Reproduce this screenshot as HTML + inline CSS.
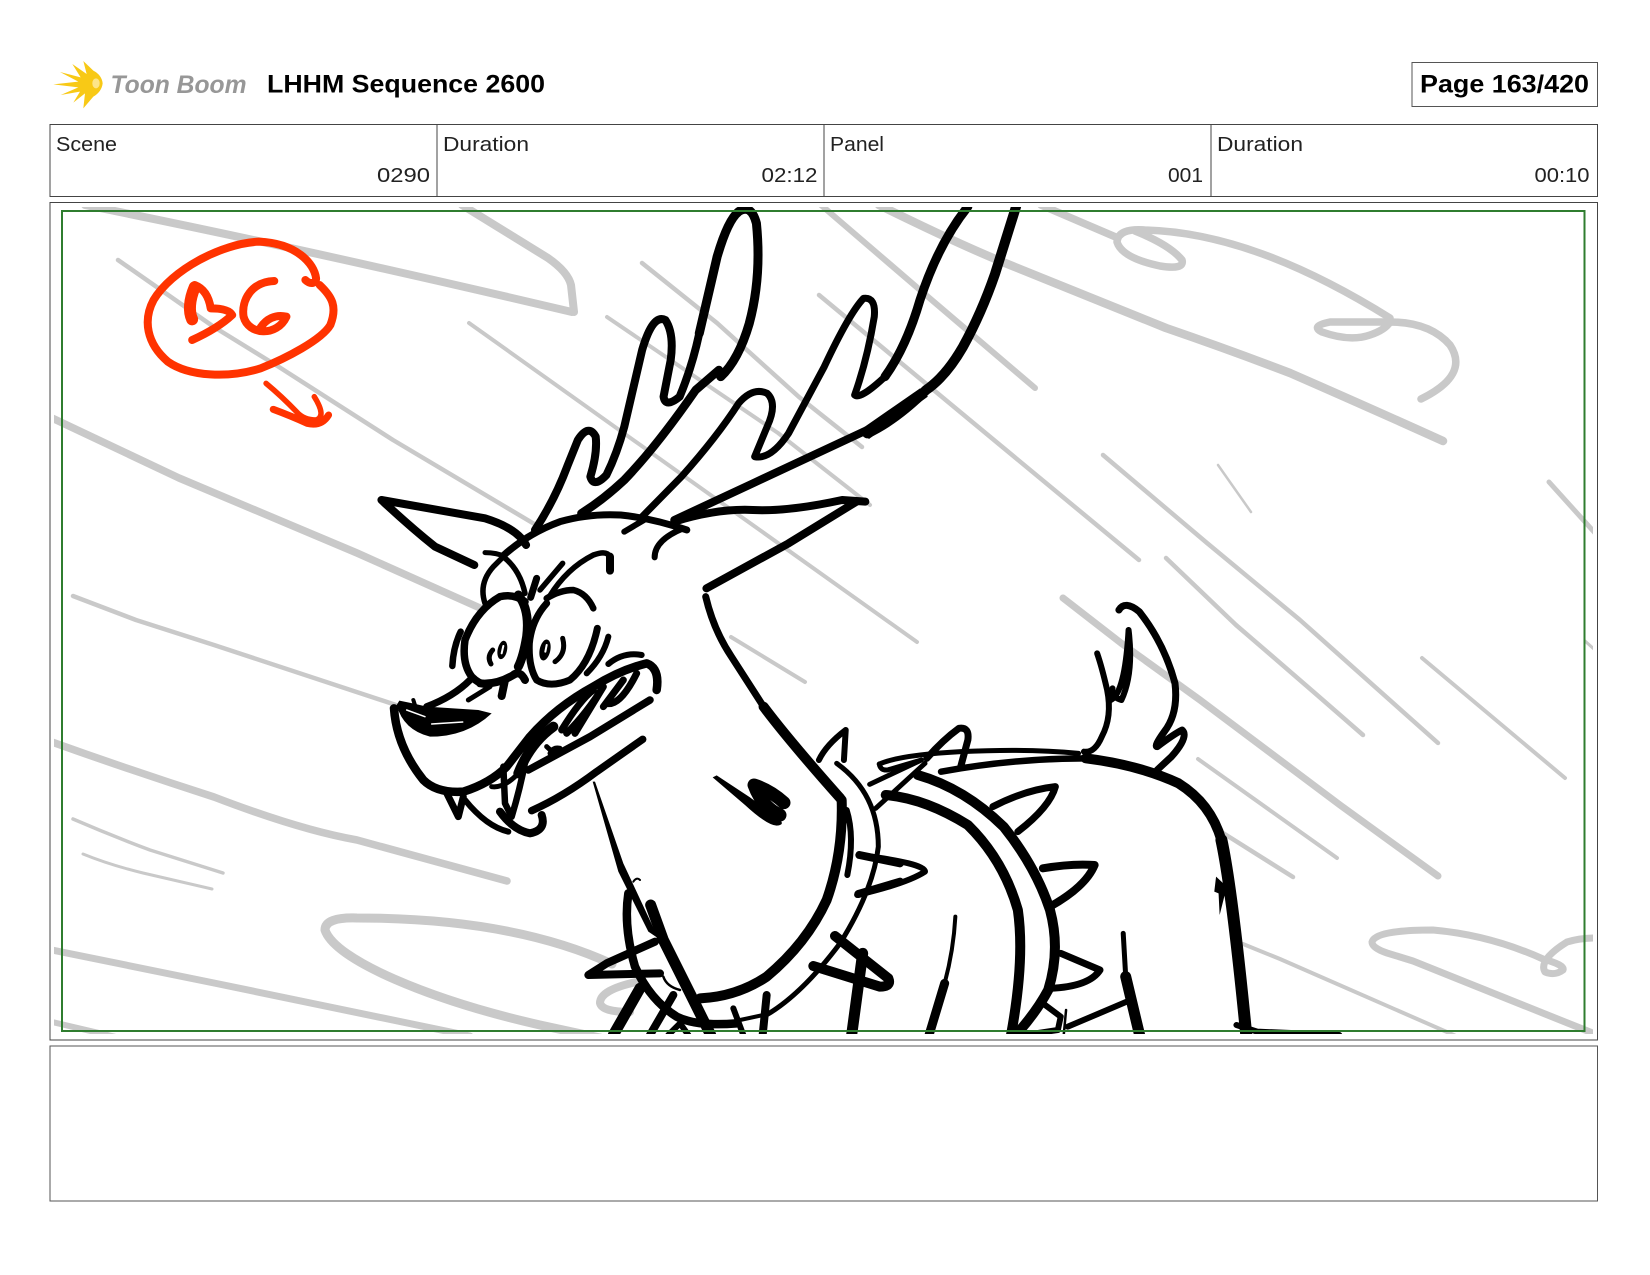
<!DOCTYPE html>
<html><head><meta charset="utf-8"><title>LHHM Sequence 2600</title>
<style>
html,body{margin:0;padding:0;background:#fff;width:1650px;height:1275px;overflow:hidden}
svg{display:block}
text{font-family:"Liberation Sans",sans-serif;fill:#222}
.a path{fill:none;stroke-linecap:round;stroke-linejoin:round;vector-effect:non-scaling-stroke}
.g path{stroke:#c9c9c9}
.k path{stroke:#000}
.r path{stroke:#ff3300}
.a path.f{fill:#000;stroke:none}
.k ellipse{fill:#000}
</style></head><body>
<svg width="1650" height="1275" viewBox="0 0 1650 1275" xmlns="http://www.w3.org/2000/svg">
<defs><clipPath id="c"><rect x="54" y="207" width="1539" height="827"/></clipPath></defs>
<rect width="1650" height="1275" fill="#fff"/>

<!-- logo -->
<g transform="translate(40,50) scale(.3333)">
<path fill="#f8c916" d="M188,100 Q185,75 160,62 L130,33 L140,72 L97,42 L122,82 L60,66 L115,95 L40,103 L115,112 L62,135 L120,125 L100,158 L135,130 L130,175 L160,140 Q185,125 188,100Z"/>
<ellipse cx="168" cy="100" rx="11" ry="15" fill="#fde58a"/>
</g>
<text x="110.5" y="93" font-size="25" font-weight="bold" font-style="italic" textLength="136" lengthAdjust="spacingAndGlyphs" style="fill:#979797">Toon Boom</text>

<text x="267" y="92.6" font-size="25" font-weight="bold" textLength="278" lengthAdjust="spacingAndGlyphs" style="fill:#000">LHHM Sequence 2600</text>
<rect x="1412" y="62.5" width="185.5" height="44" fill="#fff" stroke="#555" stroke-width="1"/>
<text x="1420" y="92.6" font-size="25" font-weight="bold" textLength="169" lengthAdjust="spacingAndGlyphs" style="fill:#000">Page 163/420</text>

<!-- header table -->
<rect x="50" y="124.5" width="1547.5" height="72" fill="#fff" stroke="#444" stroke-width="1"/>
<path d="M437,124.5V196.5M824,124.5V196.5M1211,124.5V196.5" stroke="#444" stroke-width="1" fill="none"/>
<g font-size="20">
<text x="56" y="151" textLength="61" lengthAdjust="spacingAndGlyphs">Scene</text>
<text x="443" y="151" textLength="86" lengthAdjust="spacingAndGlyphs">Duration</text>
<text x="830" y="151" textLength="54" lengthAdjust="spacingAndGlyphs">Panel</text>
<text x="1217" y="151" textLength="86" lengthAdjust="spacingAndGlyphs">Duration</text>
<text x="377" y="182" textLength="53" lengthAdjust="spacingAndGlyphs">0290</text>
<text x="761.5" y="182" textLength="56" lengthAdjust="spacingAndGlyphs">02:12</text>
<text x="1168" y="182" textLength="35" lengthAdjust="spacingAndGlyphs">001</text>
<text x="1534.5" y="182" textLength="55" lengthAdjust="spacingAndGlyphs">00:10</text>
</g>

<!-- panel frames -->
<rect x="50" y="202.5" width="1547.5" height="837.5" fill="#fff" stroke="#444" stroke-width="1"/>
<rect x="50" y="1046" width="1547.5" height="155" fill="#fff" stroke="#555" stroke-width="1"/>

<g clip-path="url(#c)">
<!-- grey background strokes (page coordinates) -->
<g class="a g">
<path stroke-width="8" d="M85,205 Q300,248 572,312 M574,312 L571,285 Q568,272 548,258 L462,205"/>
<path stroke-width="4.5" d="M118,260 L214,327 L279,367 L393,440 L536,525"/>
<path stroke-width="7.5" d="M52,418 L179,478 L357,553 L480,608"/>
<path stroke-width="4.5" d="M73,596 L136,620 L214,645 L396,705"/>
<path stroke-width="7.5" d="M52,742 Q130,770 214,797 Q300,830 357,840 L507,881"/>
<path stroke-width="3.5" d="M73,819 Q110,835 150,850 L223,873"/>
<path stroke-width="3" d="M83,854 Q110,865 143,873 L212,889"/>
<path stroke-width="7" d="M52,950 L214,983 L470,1036"/>
<path stroke-width="6" d="M52,1022 L116,1037"/>
<path stroke-width="9" d="M612,964 C560,940 480,918 357,918 Q325,917 325,930 C335,960 430,1000 540,1025 L600,1038"/>
<path stroke-width="8" d="M636,982 Q600,990 600,1003 Q602,1012 630,1012"/>
<path stroke-width="4" d="M469,323 L917,642"/>
<path stroke-width="4.5" d="M642,263 L717,323 L799,397 L862,447"/>
<path stroke-width="4" d="M607,317 L778,433 L870,505"/>
<path stroke-width="4.5" d="M819,295 L1000,445 L1139,560"/>
<path stroke-width="6" d="M821,205 L920,290 L1035,388"/>
<path stroke-width="8.5" d="M879,205 Q960,245 1010,265 L1166,328 Q1230,350 1290,373 Q1370,408 1443,441"/>
<path stroke-width="7.5" d="M1041,205 L1118,238 M1390,318 C1300,262 1220,232 1145,230 Q1118,228 1117,242 Q1122,258 1160,266 Q1185,270 1182,260 Q1170,245 1135,231"/>
<path stroke-width="7.5" d="M1390,322 Q1360,322 1330,322 Q1310,326 1322,332 Q1350,342 1370,335 Q1385,330 1390,322 Q1430,322 1450,345 Q1470,375 1421,399"/>
<path stroke-width="4.5" d="M1103,455 L1207,543 L1300,620 L1438,743"/>
<path stroke-width="4.5" d="M1166,558 L1236,625 Q1300,680 1363,735"/>
<path stroke-width="2.5" d="M1218,465 L1251,512"/>
<path stroke-width="5" d="M1549,482 L1595,533"/>
<path stroke-width="3" d="M1585,641 L1595,650"/>
<path stroke-width="4" d="M1422,658 L1565,778"/>
<path stroke-width="7" d="M1063,598 L1121,643 L1200,700 L1340,805 L1438,876"/>
<path stroke-width="4" d="M1198,759 L1337,858"/>
<path stroke-width="4.5" d="M1223,833 L1293,877"/>
<path stroke-width="4" d="M1243,944 L1280,959 L1456,1036"/>
<path stroke-width="7" d="M1595,1034 L1413,961 L1387,953 Q1372,948 1372,942 Q1375,930 1433,930 Q1490,935 1543,959 Q1565,965 1563,970 Q1555,976 1545,972 Q1538,960 1567,942 Q1580,938 1595,938"/>
<path stroke-width="4" d="M731,637 L805,682"/>
</g>

<!-- red annotation -->
<g class="a r" transform="translate(0,200) scale(.35714,.33333)">
<path stroke-width="8" d="M855,240 C870,255 885,250 885,235 C880,190 830,130 725,125 C620,130 480,210 430,300 C400,360 410,430 470,485 C530,530 640,535 730,505 C800,475 900,420 925,375 C945,320 930,290 895,255"/>
<path stroke-width="12" d="M545,262 C530,300 528,335 538,358"/>
<path stroke-width="8" d="M545,255 Q582,270 590,325 Q640,325 650,345 Q610,385 538,420"/>
<path stroke-width="8" d="M768,243 C705,245 675,300 682,350 C695,405 775,412 802,350 C770,342 745,358 730,382"/>
<path stroke-width="5.5" d="M745,550 Q790,590 830,635 Q850,660 885,660 Q915,650 880,590"/>
<path stroke-width="7" d="M765,628 Q820,650 860,670 Q900,680 920,645"/>
</g>

<!-- antlers, ears -->
<g class="a k" transform="translate(360,200) scale(.35714,.33333)">
<path stroke-width="8" d="M490,990 Q545,900 580,800 L610,720 Q640,670 660,710 Q665,760 645,830 Q655,865 690,825 Q720,760 740,680 L790,450 Q820,340 855,360 Q880,400 870,480 L850,590 Q855,625 895,590 Q930,500 950,400"/>
<path stroke-width="9" d="M950,400 L1000,170 Q1030,60 1060,35 Q1095,10 1110,70 Q1125,230 1090,370 Q1060,480 1010,530"/>
<path stroke-width="8.5" d="M620,940 Q680,900 740,840 Q830,740 940,570 M940,570 L1005,510"/>
<path stroke-width="7" d="M400,1068 Q470,1000 560,965 Q640,940 730,945 Q820,955 915,990"/>
<path stroke-width="7" d="M790,950 L900,830 Q1000,710 1060,610 Q1100,560 1140,580 Q1170,610 1140,680 L1105,770 Q1150,780 1200,700 L1300,500 Q1370,340 1410,295 Q1445,290 1440,350 Q1420,480 1385,585 Q1400,600 1470,530"/>
<path stroke-width="9" d="M1470,530 Q1530,440 1568,300 Q1620,130 1702,20"/>
<path stroke-width="8" d="M880,960 L1100,850 L1420,690"/>
<path stroke-width="10" d="M1420,700 Q1500,660 1585,570 Q1640,530 1688,441 Q1740,340 1778,222 L1837,20"/>
<path class="f" d="M1400,690 L1568,565 L1590,590 L1425,717Z"/>
<path stroke-width="8" d="M880,965 Q1000,925 1100,930 Q1200,935 1350,900 L1415,905 M1390,905 L1200,1030 L970,1165"/>
<path stroke-width="6" d="M825,1072 Q825,1020 905,985 M740,995 L795,960"/>
<path stroke-width="8" d="M465,1035 Q440,985 350,955 L60,900 M60,900 Q140,980 210,1040 L320,1095"/>
</g>

<!-- face -->
<g class="a k" transform="translate(390,540) scale(.33333)">
<path stroke-width="5" d="M285,38 Q320,38 345,50"/>
<path stroke-width="5.5" d="M285,190 Q265,130 310,80 L340,50 Q390,90 405,160"/>
<path stroke-width="7.5" d="M405,185 Q370,160 330,170 Q260,210 225,300 Q215,370 245,410 Q275,440 300,430"/>
<path stroke-width="9" d="M385,165 Q420,210 410,290 Q400,350 385,380"/>
<path stroke-width="7" d="M470,190 Q425,240 418,310 Q415,380 440,420 Q480,445 540,420 Q600,370 622,265"/>
<path stroke-width="6.5" d="M470,175 Q510,150 550,150 Q590,160 610,205"/>
<path stroke-width="6" d="M590,400 Q640,350 655,290"/>
<path stroke-width="5.5" d="M478,170 Q530,85 610,45 Q650,30 660,50"/>
<path stroke-width="8" d="M660,50 L660,92"/>
<path stroke-width="7" d="M422,172 L440,115"/>
<path stroke-width="5.5" d="M450,150 L518,70"/>
<path stroke-width="6.5" d="M187,378 Q190,320 212,275"/>
<ellipse cx="337" cy="330" rx="14" ry="28" transform="rotate(12 337 330)"/>
<ellipse cx="465" cy="330" rx="16" ry="32" transform="rotate(12 465 330)"/>
<path stroke-width="2" d="M340,318 L335,340 M470,315 L466,335" style="stroke:#fff"/>
<path stroke-width="5" d="M303,372 Q290,350 308,330 M495,365 Q530,340 518,295"/>
<path stroke-width="8" d="M270,430 Q320,435 370,405 Q390,390 405,420"/>
<path stroke-width="8" d="M345,420 L335,468"/>
<path stroke-width="5" d="M235,480 L300,440"/>
<path stroke-width="7" d="M240,420 Q190,470 110,500"/>
<path class="f" d="M28,482 Q70,490 110,500 L265,510 L305,520 Q230,590 120,590 Q40,570 20,495Z"/>
<path stroke-width="4" d="M70,480 L78,505"/>
<path stroke-width="1.5" d="M50,510 L105,530 M125,552 L218,546" style="stroke:#fff"/>
<path stroke-width="8.5" d="M12,505 Q20,620 100,720 Q140,760 220,755 Q300,730 350,680 L420,590 Q500,500 610,440 Q690,390 770,370 Q810,385 800,450"/>
<path stroke-width="6" d="M655,372 Q700,335 755,345"/>
<path stroke-width="7.5" d="M415,690 L600,590 L780,480"/>
<path stroke-width="7.5" d="M425,812 Q520,770 620,695 L758,598"/>
<path stroke-width="7" d="M515,570 Q570,480 610,450 M530,580 Q590,520 640,440 L555,580 M640,500 L700,420 M650,490 Q690,500 740,400"/>
<path stroke-width="10" d="M385,700 Q420,610 490,560"/>
<path stroke-width="5" d="M470,620 Q500,650 510,625 Q490,620 480,640"/>
<path stroke-width="6.5" d="M340,680 L345,790 L365,830 Q395,730 410,640"/>
<path stroke-width="5" d="M305,740 Q340,745 380,705"/>
<path stroke-width="7" d="M168,755 L205,830 L220,770"/>
<path stroke-width="6" d="M225,780 Q290,860 355,875"/>
<path stroke-width="8" d="M330,815 Q370,870 420,880 Q470,870 455,825"/>
</g>

<!-- neck top -->
<g class="a k" transform="translate(360,610) scale(.35714,.33333)">
<path stroke-width="7" d="M968,-40 Q990,60 1040,140 L1130,290"/>
<path stroke-width="10" d="M1130,290 Q1200,390 1345,565"/>
<path stroke-width="6" d="M1285,450 Q1305,405 1360,360 L1355,450"/>
</g>

<!-- collar -->
<g class="a k" transform="translate(580,740) scale(.33333)">
<path stroke-width="10" d="M785,180 Q790,340 740,480 Q680,610 560,710 Q470,770 360,775"/>
<path stroke-width="6" d="M800,210 Q825,290 802,405"/>
<path class="f" d="M398,112 L410,106 L510,172 L600,240 Q615,255 590,257 Q560,255 495,195Z"/>
<path stroke-width="13" d="M600,225 Q545,200 522,135 Q570,150 612,188"/>
<path class="f" d="M38,125 L45,125 L130,370 L235,595 L205,575 L115,395Z"/>
<path stroke-width="2" d="M160,425 Q170,410 180,420"/>
<path stroke-width="11" d="M212,495 L250,600 L340,780 L392,885"/>
<path stroke-width="8.5" d="M145,460 Q130,560 165,680 Q210,780 290,830 Q350,860 470,850"/>
<path stroke-width="8" d="M225,605 L80,670 L25,705 L240,700"/>
<path stroke-width="11" d="M180,745 L100,885"/>
<path stroke-width="8" d="M280,765 L210,885"/>
<path stroke-width="6" d="M265,885 L300,850 L325,885"/>
<path stroke-width="2.5" d="M250,710 Q260,740 300,750"/>
<path stroke-width="6" d="M460,805 L490,885"/>
<path stroke-width="8" d="M560,765 L548,885"/>
<path stroke-width="4" d="M480,840 L550,825"/>
<path stroke-width="5" d="M550,830 Q660,770 780,610 Q880,450 895,320 Q895,160 770,70"/>
<path stroke-width="8" d="M838,345 L960,370 M835,462 L960,425"/>
<path stroke-width="10" d="M765,588 L925,715 Q935,740 900,740 L700,678"/>
<path stroke-width="11" d="M848,640 L815,885"/>
</g>

<!-- body -->
<g class="a k" transform="translate(800,600) scale(.35714,.33333)">
<path stroke-width="6" d="M165,765 Q350,790 350,815 Q300,850 160,885"/>
<path stroke-width="6.5" d="M395,515 Q600,475 800,475"/>
<path stroke-width="10" d="M800,475 Q950,495 1060,550 Q1150,610 1180,720"/>
<path stroke-width="12" d="M1180,720 Q1210,870 1250,1310"/>
<path class="f" d="M1165,830 L1160,875 L1172,880 L1175,945 L1195,860Z"/>
<path stroke-width="5" d="M222,492 Q280,465 450,455 Q640,445 780,460"/>
<path stroke-width="5" d="M222,492 Q225,512 245,510 L340,480 L195,553"/>
<path stroke-width="7" d="M355,475 Q400,420 445,385 Q475,380 470,420 L450,500"/>
<path stroke-width="5" d="M212,625 L350,490"/>
<path stroke-width="10" d="M330,525 Q460,565 570,680 Q660,800 700,930 Q730,1050 695,1170 Q660,1240 600,1310"/>
<path stroke-width="10" d="M240,585 Q350,595 470,675 Q570,780 610,930 Q630,1080 590,1310"/>
<path stroke-width="7" d="M540,620 Q630,570 715,560 Q700,620 610,695"/>
<path stroke-width="8" d="M680,805 Q760,790 825,795 Q800,860 700,920"/>
<path stroke-width="7" d="M730,1060 L840,1110 Q810,1160 700,1165"/>
<path stroke-width="4" d="M435,950 Q430,1050 405,1150"/>
<path stroke-width="9" d="M405,1150 L360,1310"/>
<path stroke-width="5" d="M905,1000 L912,1130"/>
<path stroke-width="11" d="M912,1130 L952,1310"/>
<path stroke-width="6" d="M915,1205 L750,1280 M680,1210 L730,1250 L722,1290 L630,1305"/>
<path stroke-width="2.5" d="M745,1230 L738,1310"/>
<path stroke-width="6" d="M1222,1275 L1280,1295 L1510,1305"/>
<path stroke-width="6" d="M795,455 Q825,460 845,410 Q875,350 860,270 Q845,200 832,160"/>
<path stroke-width="7" d="M893,30 Q910,0 950,35 Q1020,130 1050,250 Q1060,340 1020,395 Q990,440 1000,440 Q1050,400 1070,390 Q1090,410 1040,470 L1000,510"/>
<path stroke-width="6" d="M920,90 Q935,220 900,300 Q870,290 875,265 M870,300 Q910,280 920,90"/>
</g>
</g>

<!-- safe frame -->
<rect x="62" y="211" width="1522.5" height="820" fill="none" stroke="#2f7d2f" stroke-width="2"/>
</svg>
</body></html>
